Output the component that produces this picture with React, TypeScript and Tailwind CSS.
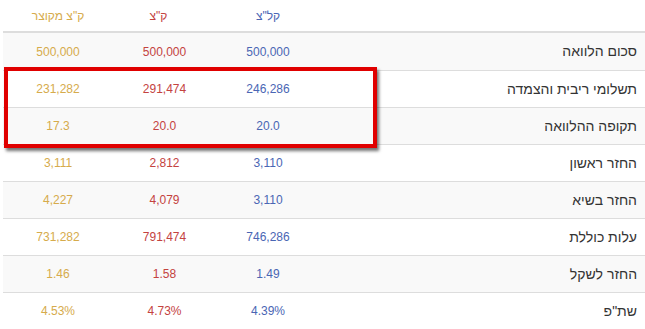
const rows = [
  { label: 'סכום הלוואה', a: '500,000', b: '500,000', c: '500,000' },
  { label: 'תשלומי ריבית והצמדה', a: '246,286', b: '291,474', c: '231,282' },
  { label: 'תקופה ההלוואה', a: '20.0', b: '20.0', c: '17.3' },
  { label: 'החזר ראשון', a: '3,110', b: '2,812', c: '3,111' },
  { label: 'החזר בשיא', a: '3,110', b: '4,079', c: '4,227' },
  { label: 'עלות כוללת', a: '746,286', b: '791,474', c: '731,282' },
  { label: 'החזר לשקל', a: '1.49', b: '1.58', c: '1.46' },
  { label: 'שת"פ', a: '4.39%', b: '4.73%', c: '4.53%' },
];

const cols = 'grid grid-cols-[325px_104px_103px_110px]';

export default function App() {
  return (
    <div className="relative w-[645px] h-[329px] overflow-hidden bg-white font-['Liberation_Sans',Arial,sans-serif] text-[12px]">
      <div dir="rtl" className="ml-[3px] w-[642px]">
        {/* header */}
        <div className={`${cols} h-[33px] items-center border-b-2 border-[#dddddd]`}>
          <div />
          <div className="flex justify-center text-[#4a66b4]">קל"צ</div>
          <div className="flex justify-center pr-[12px] text-[#c4433f]">ק"צ</div>
          <div className="flex justify-center text-[#d6ab4c]">ק"צ מקוצר</div>
        </div>

        {rows.map((r, i) => (
          <div
            key={i}
            className={`${cols} h-[37px] items-center ${i > 0 ? 'border-t border-[#dddddd]' : ''} ${i % 2 === 0 ? 'bg-[#f9f9f9]' : 'bg-white'}`}
          >
            <div className="text-right pr-[8px] text-[14px] text-[#333333]">{r.label}</div>
            <div className="text-center text-[#4a66b4]">{r.a}</div>
            <div className="text-center text-[#c4433f]">{r.b}</div>
            <div className="text-center text-[#d6ab4c]">{r.c}</div>
          </div>
        ))}
      </div>

      {/* highlight box */}
      <div className="absolute left-[4px] top-[67px] w-[373px] h-[81px] border-4 border-[#e00000] shadow-[2px_3px_3px_rgba(0,0,0,0.55)]" />
    </div>
  );
}
